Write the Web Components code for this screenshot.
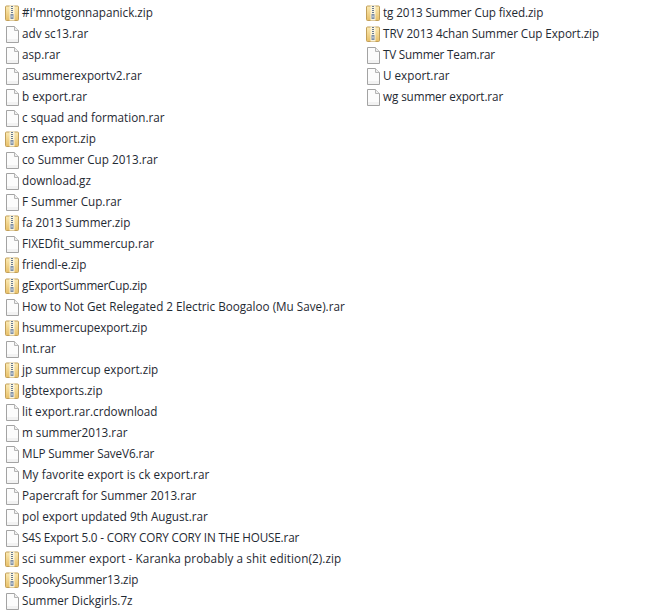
<!DOCTYPE html>
<html>
<head>
<meta charset="utf-8">
<title>Files</title>
<style>
  html, body { margin: 0; background: #fff; overflow: hidden; }
</style>
</head>
<body>
<file-pane id="pane"></file-pane>
<script>
const ICONS = {
  zip: `<svg width="16" height="18" viewBox="0 0 16 18">
    <defs><linearGradient id="f" x1="0" y1="0" x2="0" y2="1">
      <stop offset="0" stop-color="#fbeab4"/><stop offset="1" stop-color="#e8c068"/>
    </linearGradient></defs>
    <path d="M.5 3q0-1 1-1h11q1 0 1 1v12.500q0 1-1 1h-11q-1 0-1-1z" fill="url(#f)" stroke="#c2a05a"/>
    <path d="M4.500 1.500h5v15h-5z" fill="#fbf4dc"/>
    <path d="M6 2h2v1H6zM6 4h2v1H6zM6 6h2v1H6zM6 8h2v1H6z" fill="#66788f"/>
    <path d="M5.500 10h3v5h-3z" fill="#7b8ca4"/>
    <path d="M6.500 11.500h1v2h-1z" fill="#eef1f5"/>
  </svg>`,
  file: `<svg width="16" height="18" viewBox="0 0 16 18">
    <path d="M1.500 1.500h8l4 4v12h-12z" fill="#fcfcfc" stroke="#a3a3a3"/>
    <path d="M2 14h11v3H2z" fill="#f2f2f2"/>
    <path d="M9.500 1.500v4h4" fill="#efefef" stroke="#b5b5b5"/>
  </svg>`
};

// Segoe widths differ from Open Sans on some names
const NUDGE = {
  'S4S Export 5.0 - CORY CORY CORY IN THE HOUSE.rar': -0.17,
  'sci summer export - Karanka probably a shit edition(2).zip': 0.1,
  'My favorite export is ck export.rar': 0.09,
  'gExportSummerCup.zip': -0.2,
  'hsummercupexport.zip': -0.1,
  'MLP Summer SaveV6.rar': -0.1,
  'SpookySummer13.zip': -0.1,
  'tg 2013 Summer Cup fixed.zip': -0.1,
  'TRV 2013 4chan Summer Cup Export.zip': -0.06,
  'TV Summer Team.rar': -0.2,
  'wg summer export.rar': -0.1
};

class FileRow extends HTMLElement {
  constructor() {
    super();
    this.attachShadow({ mode: 'open' });
    this.shadowRoot.innerHTML = `
      <style>
        :host {
          display: flex;
          align-items: center;
          gap: 1px;
          height: 21px;
          white-space: nowrap;
        }
        .icon { width: 16px; height: 18px; flex: none; display: block; margin-top: 2px; }
        .icon svg { display: block; }
      </style>
      <span class="icon"></span>
      <slot></slot>
    `;
  }

  connectedCallback() {
    const zipped = this.textContent.endsWith('.zip');
    this.shadowRoot.querySelector('.icon').innerHTML = zipped ? ICONS.zip : ICONS.file;
  }
}

class FileColumn extends HTMLElement {
  constructor() {
    super();
    this.attachShadow({ mode: 'open' });
    this.shadowRoot.innerHTML = `
      <style>
        :host { display: flex; flex-direction: column; }
      </style>
      <slot></slot>
    `;
  }

  set files(list) {
    list.forEach((name) => {
      const row = document.createElement('file-row');
      row.textContent = name;
      if (NUDGE[name]) row.style.letterSpacing = `${NUDGE[name]}px`;
      this.appendChild(row);
    });
  }
}

class FilePane extends HTMLElement {
  constructor() {
    super();
    this.attachShadow({ mode: 'open' });
    this.shadowRoot.innerHTML = `
      <style>
        :host {
          display: grid;
          grid-template-columns: 361px 1fr;
          padding: 1px 0 0 5px;
          font: 11.7px "Open Sans", sans-serif;
          color: #1f2a33;
        }
      </style>
      <slot></slot>
    `;
  }
}

customElements.define('file-row', FileRow);
customElements.define('file-column', FileColumn);
customElements.define('file-pane', FilePane);

const left = [
  "#I'mnotgonnapanick.zip", 'adv sc13.rar', 'asp.rar', 'asummerexportv2.rar', 'b export.rar',
  'c squad and formation.rar', 'cm export.zip', 'co Summer Cup 2013.rar', 'download.gz',
  'F Summer Cup.rar', 'fa 2013 Summer.zip', 'FIXEDfit_summercup.rar', 'friendl-e.zip',
  'gExportSummerCup.zip', 'How to Not Get Relegated 2 Electric Boogaloo (Mu Save).rar',
  'hsummercupexport.zip', 'Int.rar', 'jp summercup export.zip', 'lgbtexports.zip',
  'lit export.rar.crdownload', 'm summer2013.rar', 'MLP Summer SaveV6.rar',
  'My favorite export is ck export.rar', 'Papercraft for Summer 2013.rar',
  'pol export updated 9th August.rar', 'S4S Export 5.0 - CORY CORY CORY IN THE HOUSE.rar',
  'sci summer export - Karanka probably a shit edition(2).zip', 'SpookySummer13.zip',
  'Summer Dickgirls.7z'
];
const right = [
  'tg 2013 Summer Cup fixed.zip', 'TRV 2013 4chan Summer Cup Export.zip',
  'TV Summer Team.rar', 'U export.rar', 'wg summer export.rar'
];

const pane = document.getElementById('pane');
[left, right].forEach((names) => {
  const col = document.createElement('file-column');
  pane.appendChild(col);
  col.files = names;
});
</script>
</body>
</html>
